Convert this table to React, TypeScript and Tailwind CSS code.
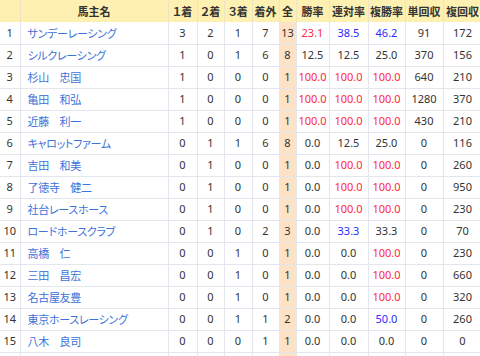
const R = 'r'
const B = 'b'

type Cell = string | [string, string]

const rows: [string, number, number, number, number, number, Cell, Cell, Cell, string, string][] = [
  ['サンデーレーシング', 3, 2, 1, 7, 13, ['23.1', R], ['38.5', B], ['46.2', B], '91', '172'],
  ['シルクレーシング', 1, 0, 1, 6, 8, '12.5', '12.5', '25.0', '370', '156'],
  ['杉山　忠国', 1, 0, 0, 0, 1, ['100.0', R], ['100.0', R], ['100.0', R], '640', '210'],
  ['亀田　和弘', 1, 0, 0, 0, 1, ['100.0', R], ['100.0', R], ['100.0', R], '1280', '370'],
  ['近藤　利一', 1, 0, 0, 0, 1, ['100.0', R], ['100.0', R], ['100.0', R], '430', '210'],
  ['キャロットファーム', 0, 1, 1, 6, 8, '0.0', '12.5', '25.0', '0', '116'],
  ['吉田　和美', 0, 1, 0, 0, 1, '0.0', ['100.0', R], ['100.0', R], '0', '260'],
  ['了徳寺　健二', 0, 1, 0, 0, 1, '0.0', ['100.0', R], ['100.0', R], '0', '950'],
  ['社台レースホース', 0, 1, 0, 0, 1, '0.0', ['100.0', R], ['100.0', R], '0', '230'],
  ['ロードホースクラブ', 0, 1, 0, 2, 3, '0.0', ['33.3', B], '33.3', '0', '70'],
  ['高橋　仁', 0, 0, 1, 0, 1, '0.0', '0.0', ['100.0', R], '0', '230'],
  ['三田　昌宏', 0, 0, 1, 0, 1, '0.0', '0.0', ['100.0', R], '0', '660'],
  ['名古屋友豊', 0, 0, 1, 0, 1, '0.0', '0.0', ['100.0', R], '0', '320'],
  ['東京ホースレーシング', 0, 0, 1, 1, 2, '0.0', '0.0', ['50.0', B], '0', '260'],
  ['八木　良司', 0, 0, 0, 1, 1, '0.0', '0.0', '0.0', '0', '0'],
]

const rateCls = (c: Cell) => {
  if (typeof c === 'string') return { v: c, cls: 'text-[#333]' }
  return { v: c[0], cls: c[1] === R ? 'text-[#ff2a3a]' : 'text-[#2b2bff]' }
}

export default function App() {
  const th = 'border-r border-[#ece4c4] font-bold text-[11px] text-[#333] text-center p-0 whitespace-nowrap'
  const cell = 'border-r border-b border-[#e3e6ec] text-center p-0'
  const td = `${cell} text-[#333]`
  return (
    <div className="w-[480px] h-[356px] overflow-hidden bg-white font-['Noto_Sans','Noto_Sans_CJK_JP',sans-serif] text-[11px]">
      <table className="table-fixed border-collapse w-[482px]">
        <colgroup>
          <col className="w-[20px]" />
          <col className="w-[148px]" />
          <col className="w-[29px]" />
          <col className="w-[27px]" />
          <col className="w-[28px]" />
          <col className="w-[27px]" />
          <col className="w-[17px]" />
          <col className="w-[33px]" />
          <col className="w-[39px]" />
          <col className="w-[37px]" />
          <col className="w-[38px]" />
          <col className="w-[39px]" />
        </colgroup>
        <thead>
          <tr className="h-[22px] bg-[#fdf0b0] font-['Noto_Sans_CJK_JP',sans-serif] [font-feature-settings:'palt']">
            <th className={th}></th>
            <th className={th}>馬主名</th>
            <th className={th}>１着</th>
            <th className={th}>２着</th>
            <th className={th}>３着</th>
            <th className={th}>着外</th>
            <th className={th}>全</th>
            <th className={th}>勝率</th>
            <th className={th}>連対率</th>
            <th className={th}>複勝率</th>
            <th className={th}>単回収</th>
            <th className={th}>複回収</th>
          </tr>
        </thead>
        <tbody>
          {rows.map((r, i) => {
            const [name, a, b, c, d, all, w, q, p, tan, fuku] = r
            return (
              <tr key={i} className="h-[22px]">
                <td className={td}>{i + 1}</td>
                <td className={`${cell} text-left pl-[7px] text-[#3d72d9] font-['Noto_Sans_CJK_JP',sans-serif] [font-feature-settings:'palt'] text-[11px] tracking-[-0.3px] whitespace-nowrap`}>
                  {name}
                </td>
                <td className={td}>{a}</td>
                <td className={td}>{b}</td>
                <td className={td}>{c}</td>
                <td className={td}>{d}</td>
                <td className={`${td} bg-[#fde2c6]`}>{all}</td>
                {[w, q, p].map((x, j) => {
                  const { v, cls } = rateCls(x)
                  return (
                    <td key={j} className={`${cell} ${cls}`}>
                      {v}
                    </td>
                  )
                })}
                <td className={td}>{tan}</td>
                <td className={td}>{fuku}</td>
              </tr>
            )
          })}
          <tr className="h-[22px]">
            <td className={cell}></td>
            <td className={cell}></td>
            <td className={cell}></td>
            <td className={cell}></td>
            <td className={cell}></td>
            <td className={cell}></td>
            <td className={`${cell} bg-[#fde2c6]`}></td>
            <td className={cell}></td>
            <td className={cell}></td>
            <td className={cell}></td>
            <td className={cell}></td>
            <td className={cell}></td>
          </tr>
        </tbody>
      </table>
    </div>
  )
}
